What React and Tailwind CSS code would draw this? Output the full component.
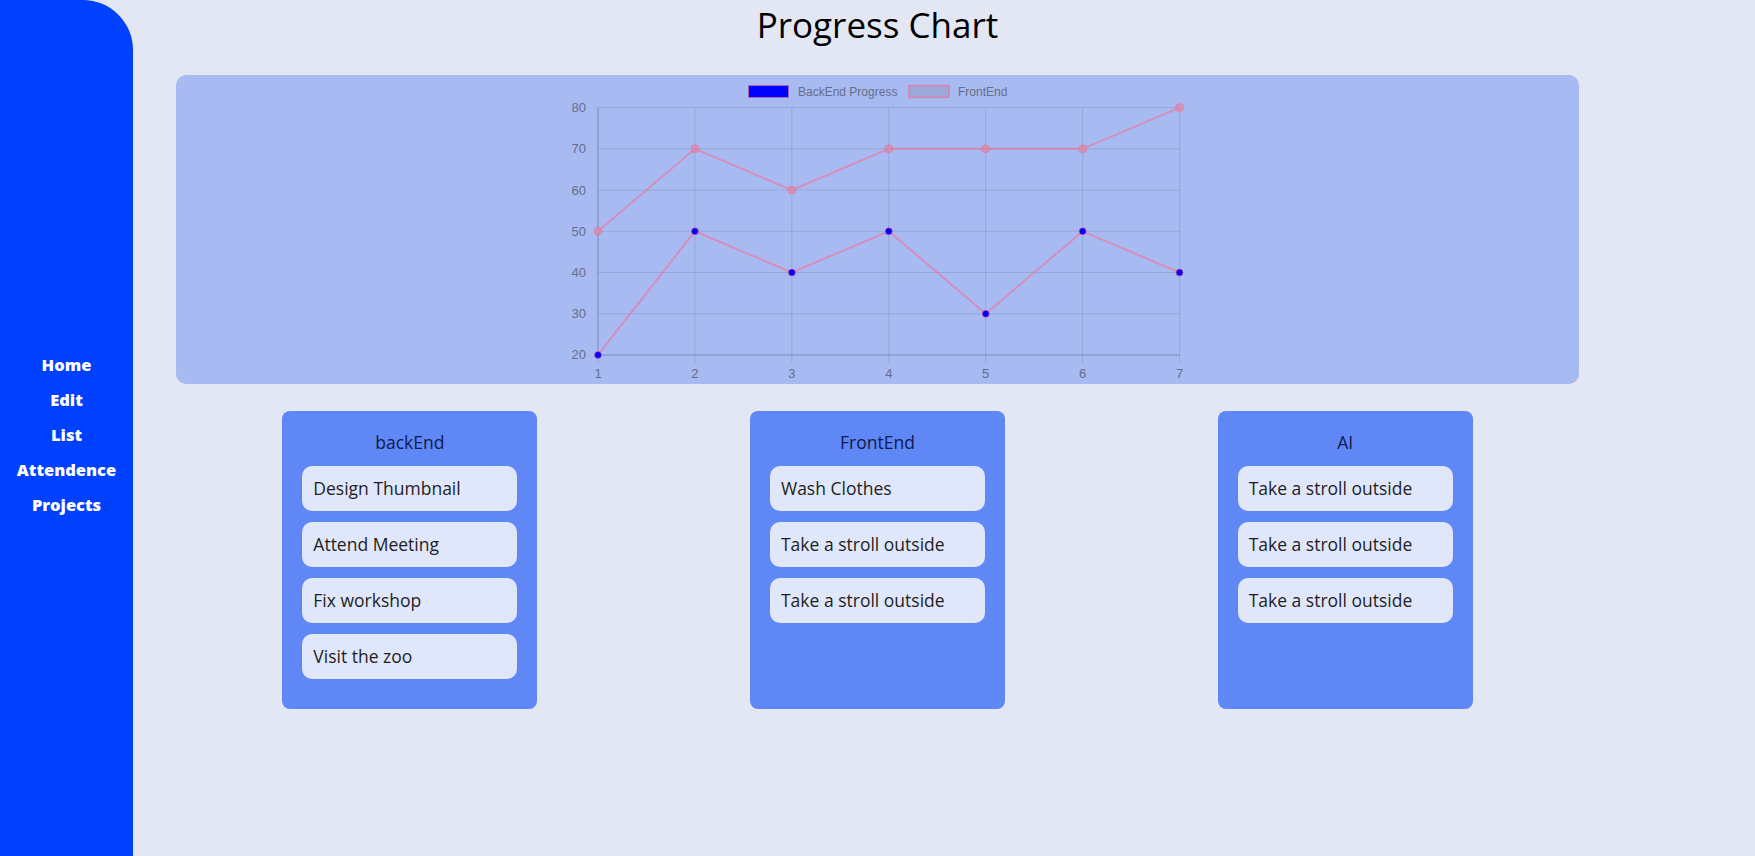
import React from 'react';

const backEnd = ['Design Thumbnail', 'Attend Meeting', 'Fix workshop', 'Visit the zoo'];
const frontEnd = ['Wash Clothes', 'Take a stroll outside', 'Take a stroll outside'];
const ai = ['Take a stroll outside', 'Take a stroll outside', 'Take a stroll outside'];

const backData = [20, 50, 40, 50, 30, 50, 40];
const frontData = [50, 70, 60, 70, 70, 70, 80];

const X0 = 422;
const XSTEP = 96.93;
const Y80 = 32.6;
const YSTEP = 4.123; // px per unit

const px = (i) => X0 + i * XSTEP;
const py = (v) => Y80 + (80 - v) * YSTEP;
const chartFont = "'Liberation Sans', Arial, sans-serif";

function ProgressChart() {
  const ticks = [80, 70, 60, 50, 40, 30, 20];
  const line = (data) => data.map((v, i) => `${i === 0 ? 'M' : 'L'}${px(i)},${py(v)}`).join(' ');
  return (
    <svg viewBox="0 0 1403 309" width="1403" height="309" className="block">
      {/* legend */}
      <rect x="572.5" y="10.5" width="40" height="12" fill="#0000ff" stroke="rgba(255,99,132,0.5)" strokeWidth="1" />
      <text x="622" y="20.5" fontSize="12" fill="#666d88" fontFamily={chartFont}>BackEnd Progress</text>
      <rect x="733" y="10.5" width="40" height="12" fill="rgba(150,160,200,0.6)" stroke="rgba(255,99,132,0.6)" strokeWidth="1.5" />
      <text x="782" y="20.5" fontSize="12" fill="#666d88" fontFamily={chartFont}>FrontEnd</text>

      {/* grid */}
      {ticks.map((t) => (
        <g key={t}>
          <line x1={X0} x2={px(6)} y1={py(t)} y2={py(t)} stroke="rgba(0,0,0,0.1)" strokeWidth="1" />
          <text x="410" y={py(t) + 4.5} fontSize="13" textAnchor="end" fill="#666d88" fontFamily={chartFont}>{t}</text>
        </g>
      ))}
      {backData.map((_, i) => (
        <g key={i}>
          <line x1={px(i)} x2={px(i)} y1={py(80)} y2={py(20) + 8} stroke="rgba(0,0,0,0.1)" strokeWidth="1" />
          <text x={px(i)} y="302.5" fontSize="13" textAnchor="middle" fill="#666d88" fontFamily={chartFont}>{i + 1}</text>
        </g>
      ))}
      <line x1={X0} x2={X0} y1={py(80)} y2={py(20)} stroke="rgba(0,0,0,0.16)" strokeWidth="1" />
      <line x1={X0} x2={px(6)} y1={py(20)} y2={py(20)} stroke="rgba(0,0,0,0.16)" strokeWidth="1" />

      {/* lines */}
      <path d={line(frontData)} fill="none" stroke="rgba(255,99,132,0.5)" strokeWidth="2" />
      <path d={line(backData)} fill="none" stroke="rgba(255,99,132,0.5)" strokeWidth="2" />
      {frontData.map((v, i) => (
        <circle key={'f' + i} cx={px(i)} cy={py(v)} r="4" fill="rgba(210,140,175,0.8)" stroke="rgba(255,99,132,0.5)" strokeWidth="1" />
      ))}
      {backData.map((v, i) => (
        <circle key={'b' + i} cx={px(i)} cy={py(v)} r="3.5" fill="#0000ff" stroke="rgba(255,99,132,0.6)" strokeWidth="1" />
      ))}
    </svg>
  );
}

function TaskCard({ title, items }) {
  return (
    <div className="w-[255px] h-[298px] rounded-[8px] bg-[#5f87f5] px-5 pt-[19px]">
      <h4 className="text-center text-[17.5px] leading-[25px] text-[#0d1b4d] mb-[11px]">{title}</h4>
      <div className="flex flex-col gap-[11px]">
        {items.map((item, i) => (
          <div key={i} className="h-[45px] rounded-[10px] bg-[#e0e7fb] px-[11px] flex items-center text-[17.5px] text-[#1e1e24]">
            {item}
          </div>
        ))}
      </div>
    </div>
  );
}

export default function App() {
  return (
    <div className="h-screen w-full flex bg-[#e2e7f3] overflow-hidden" style={{ fontFamily: "'Open Sans', 'Noto Sans', sans-serif" }}>
      {/* Sidebar */}
      <div className="w-[133px] h-full shrink-0 bg-[#0040ff] rounded-tr-[50px] flex flex-col items-center justify-center pt-3">
        {['Home', 'Edit', 'List', 'Attendence', 'Projects'].map((link) => (
          <a key={link} href="#" className="text-white font-extrabold text-[16.5px] leading-[35px]">
            {link}
          </a>
        ))}
      </div>

      {/* Main */}
      <div className="flex-1">
        <div className="ml-[43px] w-[1403px]">
          <h2 className="h-[50px] leading-[50px] text-center text-[35px] text-black mb-[25px]">Progress Chart</h2>
          <div className="h-[309px] rounded-[10px] bg-[#a8baf2] overflow-hidden">
            <ProgressChart />
          </div>
          <div className="flex justify-around mt-[27px]">
            <TaskCard title="backEnd" items={backEnd} />
            <TaskCard title="FrontEnd" items={frontEnd} />
            <TaskCard title="AI" items={ai} />
          </div>
        </div>
      </div>
    </div>
  );
}
